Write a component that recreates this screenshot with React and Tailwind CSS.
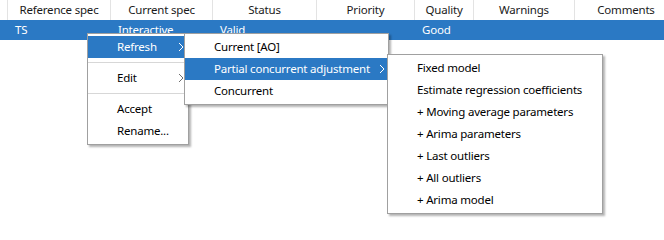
import React from "react";

const font = { fontFamily: '"Noto Sans", "Open Sans", sans-serif' };

function Chevron({ white }) {
  return (
    <svg width="6" height="10" viewBox="0 0 6 10" className="block">
      <polyline
        points="1,1 5,5 1,9"
        fill="none"
        stroke={white ? "#ffffff" : "#6e6e6e"}
        strokeWidth="1"
      />
    </svg>
  );
}

function Item({ label, active, arrow, arrowRight = "right-[4px]" }) {
  return (
    <div
      className={`relative h-[22px] flex items-center pl-[29px] whitespace-nowrap ${
        active ? "bg-[#2b79c4] text-white" : "text-black"
      }`}
    >
      {label}
      {arrow && (
        <span className={`absolute top-[6px] ${arrowRight}`}>
          <Chevron white={active} />
        </span>
      )}
    </div>
  );
}

function Sep() {
  return (
    <div className="h-[9px] flex items-center">
      <div className="h-px w-full bg-[#d7d7d7]" />
    </div>
  );
}

const cols = [
  { w: "w-[103px]", h: "Reference spec", v: "TS" },
  { w: "w-[102px]", h: "Current spec", v: "Interactive" },
  { w: "w-[104px]", h: "Status", v: "Valid" },
  { w: "w-[98px]", h: "Priority", v: "" },
  { w: "w-[59px]", h: "Quality", v: "Good" },
  { w: "w-[101px]", h: "Warnings", v: "" },
  { w: "w-[103px]", h: "Comments", v: "" },
];

export default function App() {
  return (
    <div
      className="relative w-[664px] h-[240px] bg-white overflow-hidden text-[11.5px] tracking-[-0.2px]"
      style={font}
    >
      {/* header */}
      <div className="flex h-[20px] text-[#1a1a1a]">
        <div className="w-[8px] shrink-0 border-r border-[#e3e3e3]" />
        {cols.map((c) => (
          <div
            key={c.h}
            className={`${c.w} shrink-0 border-r border-[#e3e3e3] flex items-center justify-center`}
          >
            {c.h}
          </div>
        ))}
      </div>
      {/* row */}
      <div className="flex h-[20px] bg-[#2b79c4] text-white">
        <div className="w-[8px] shrink-0" />
        {cols.map((c) => (
          <div
            key={c.h}
            className={`${c.w} shrink-0 flex items-center pl-[7px]`}
          >
            {c.v}
          </div>
        ))}
      </div>

      {/* main context menu */}
      <div className="absolute left-[87px] top-[33px] w-[102px] border border-[#a0a0a0] bg-white py-[2px] shadow-[2px_2px_2px_rgba(0,0,0,0.3)]">
        <Item label="Refresh" active arrow />
        <Sep />
        <Item label="Edit" arrow />
        <Sep />
        <Item label="Accept" />
        <Item label="Rename..." />
      </div>

      {/* submenu refresh */}
      <div className="absolute left-[184px] top-[33px] w-[205px] border border-[#a0a0a0] bg-white py-[2px] shadow-[2px_2px_2px_rgba(0,0,0,0.3)]">
        <Item label="Current [AO]" />
        <Item
          label="Partial concurrent adjustment"
          active
          arrow
          arrowRight="right-[3px]"
        />
        <Item label="Concurrent" />
      </div>

      {/* submenu partial */}
      <div className="absolute left-[387px] top-[54px] w-[216px] border border-[#a0a0a0] bg-white py-[2px] shadow-[2px_2px_2px_rgba(0,0,0,0.3)]">
        <Item label="Fixed model" />
        <Item label="Estimate regression coefficients" />
        <Item label="+ Moving average parameters" />
        <Item label="+ Arima parameters" />
        <Item label="+ Last outliers" />
        <Item label="+ All outliers" />
        <Item label="+ Arima model" />
      </div>
    </div>
  );
}
